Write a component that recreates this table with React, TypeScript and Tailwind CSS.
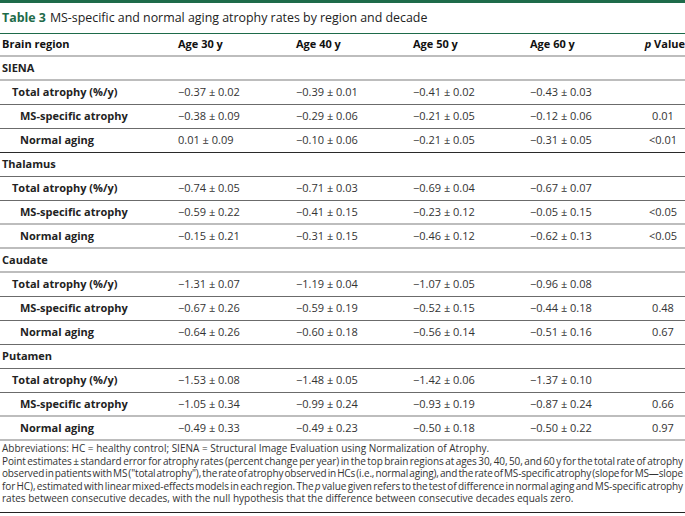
import React from "react";

type Row = {
  label: string;
  level: 0 | 1 | 2;
  vals?: string[];
  p?: string;
  line: "dark" | "gray" | "black";
};

const rows: Row[] = [
  { label: "SIENA", level: 0, line: "gray" },
  { label: "Total atrophy (%/y)", level: 1, vals: ["−0.37 ± 0.02", "−0.39 ± 0.01", "−0.41 ± 0.02", "−0.43 ± 0.03"], line: "dark" },
  { label: "MS-specific atrophy", level: 2, vals: ["−0.38 ± 0.09", "−0.29 ± 0.06", "−0.21 ± 0.05", "−0.12 ± 0.06"], p: "0.01", line: "dark" },
  { label: "Normal aging", level: 2, vals: ["0.01 ± 0.09", "−0.10 ± 0.06", "−0.21 ± 0.05", "−0.31 ± 0.05"], p: "<0.01", line: "black" },
  { label: "Thalamus", level: 0, line: "dark" },
  { label: "Total atrophy (%/y)", level: 1, vals: ["−0.74 ± 0.05", "−0.71 ± 0.03", "−0.69 ± 0.04", "−0.67 ± 0.07"], line: "dark" },
  { label: "MS-specific atrophy", level: 2, vals: ["−0.59 ± 0.22", "−0.41 ± 0.15", "−0.23 ± 0.12", "−0.05 ± 0.15"], p: "<0.05", line: "gray" },
  { label: "Normal aging", level: 2, vals: ["−0.15 ± 0.21", "−0.31 ± 0.15", "−0.46 ± 0.12", "−0.62 ± 0.13"], p: "<0.05", line: "gray" },
  { label: "Caudate", level: 0, line: "gray" },
  { label: "Total atrophy (%/y)", level: 1, vals: ["−1.31 ± 0.07", "−1.19 ± 0.04", "−1.07 ± 0.05", "−0.96 ± 0.08"], line: "dark" },
  { label: "MS-specific atrophy", level: 2, vals: ["−0.67 ± 0.26", "−0.59 ± 0.19", "−0.52 ± 0.15", "−0.44 ± 0.18"], p: "0.48", line: "dark" },
  { label: "Normal aging", level: 2, vals: ["−0.64 ± 0.26", "−0.60 ± 0.18", "−0.56 ± 0.14", "−0.51 ± 0.16"], p: "0.67", line: "dark" },
  { label: "Putamen", level: 0, line: "dark" },
  { label: "Total atrophy (%/y)", level: 1, vals: ["−1.53 ± 0.08", "−1.48 ± 0.05", "−1.42 ± 0.06", "−1.37 ± 0.10"], line: "dark" },
  { label: "MS-specific atrophy", level: 2, vals: ["−1.05 ± 0.34", "−0.99 ± 0.24", "−0.93 ± 0.19", "−0.87 ± 0.24"], p: "0.66", line: "gray" },
  { label: "Normal aging", level: 2, vals: ["−0.49 ± 0.33", "−0.49 ± 0.23", "−0.50 ± 0.18", "−0.50 ± 0.22"], p: "0.97", line: "gray" },
];

const lineClass = {
  dark: "border-b border-[#6b6b6b]",
  gray: "border-b-2 border-[#bdbdbd]",
  black: "border-b border-[#2a2a2a]",
};

const indent = ["pl-[2px]", "pl-[12px]", "pl-[20px]"];

const grid = "grid grid-cols-[178px_118px_117px_117px_111px_44px] items-center";

// justified footnote lines: squeeze spacing so the line fits, justify spreads it back out
const just = "text-justify [text-align-last:justify] [word-spacing:-1.5px] tracking-[-0.1px]";
const justTight = "text-justify [text-align-last:justify] [word-spacing:-2.5px] tracking-[-0.15px]";

export default function App() {
  return (
    <div className="w-[685px] h-[516px] bg-white overflow-hidden font-['Open_Sans',_'Noto_Sans',_sans-serif] text-[#333]">
      <div className="h-[3px] bg-[#1e6b4a]" />

      {/* Title */}
      <div className="h-[31px] flex items-center border-b border-[#1e6b4a] pl-[2px] text-[12.4px] leading-none">
        <span className="font-bold text-[#1e6b4a] mr-[4px]">Table 3</span>
        <span className="text-[#222]">MS-specific and normal aging atrophy rates by region and decade</span>
      </div>

      {/* Header */}
      <div className={`${grid} h-[23px] border-b-2 border-[#bdbdbd] text-[11px] font-bold text-[#111]`}>
        <div className="pl-[2px]">Brain region</div>
        <div>Age 30 y</div>
        <div>Age 40 y</div>
        <div>Age 50 y</div>
        <div>Age 60 y</div>
        <div className="text-right whitespace-nowrap">
          <span className="italic">p</span> Value
        </div>
      </div>

      {rows.map((r, i) => (
        <div key={i} className={`${grid} h-[24px] text-[11px] ${lineClass[r.line]}`}>
          <div className={`${indent[r.level]} font-bold text-[#222] whitespace-nowrap`}>{r.label}</div>
          {r.vals ? (
            r.vals.map((v, j) => (
              <div key={j} className="whitespace-nowrap">{v}</div>
            ))
          ) : (
            <>
              <div />
              <div />
              <div />
              <div />
            </>
          )}
          <div className="text-center">{r.p ?? ""}</div>
        </div>
      ))}

      {/* Footnote */}
      <div className="pt-[1px] pl-[2px] pr-[2px] text-[10px] leading-[12.5px] text-[#333]">
        <div className="whitespace-nowrap">
          Abbreviations: HC = healthy control; SIENA = Structural Image Evaluation using Normalization of Atrophy.
        </div>
        <div className={just}>
          Point estimates ± standard error for atrophy rates (percent change per year) in the top brain regions at ages 30, 40, 50, and 60 y for the total rate of atrophy
        </div>
        <div className={justTight}>
          observed in patients with MS ("total atrophy"), the rate of atrophy observed in HCs (i.e., normal aging), and the rate of MS-specific atrophy (slope for{" "}
          <span className="whitespace-nowrap">MS—slope</span>
        </div>
        <div className={just}>
          for HC), estimated with linear mixed-effects models in each region. The <span className="italic">p</span> value given refers to the test of difference in normal aging and MS-specific atrophy
        </div>
        <div className="whitespace-nowrap">
          rates between consecutive decades, with the null hypothesis that the difference between consecutive decades equals zero.
        </div>
      </div>
      <div className="mt-[7px] h-[1.5px] bg-[#222]" />
    </div>
  );
}
